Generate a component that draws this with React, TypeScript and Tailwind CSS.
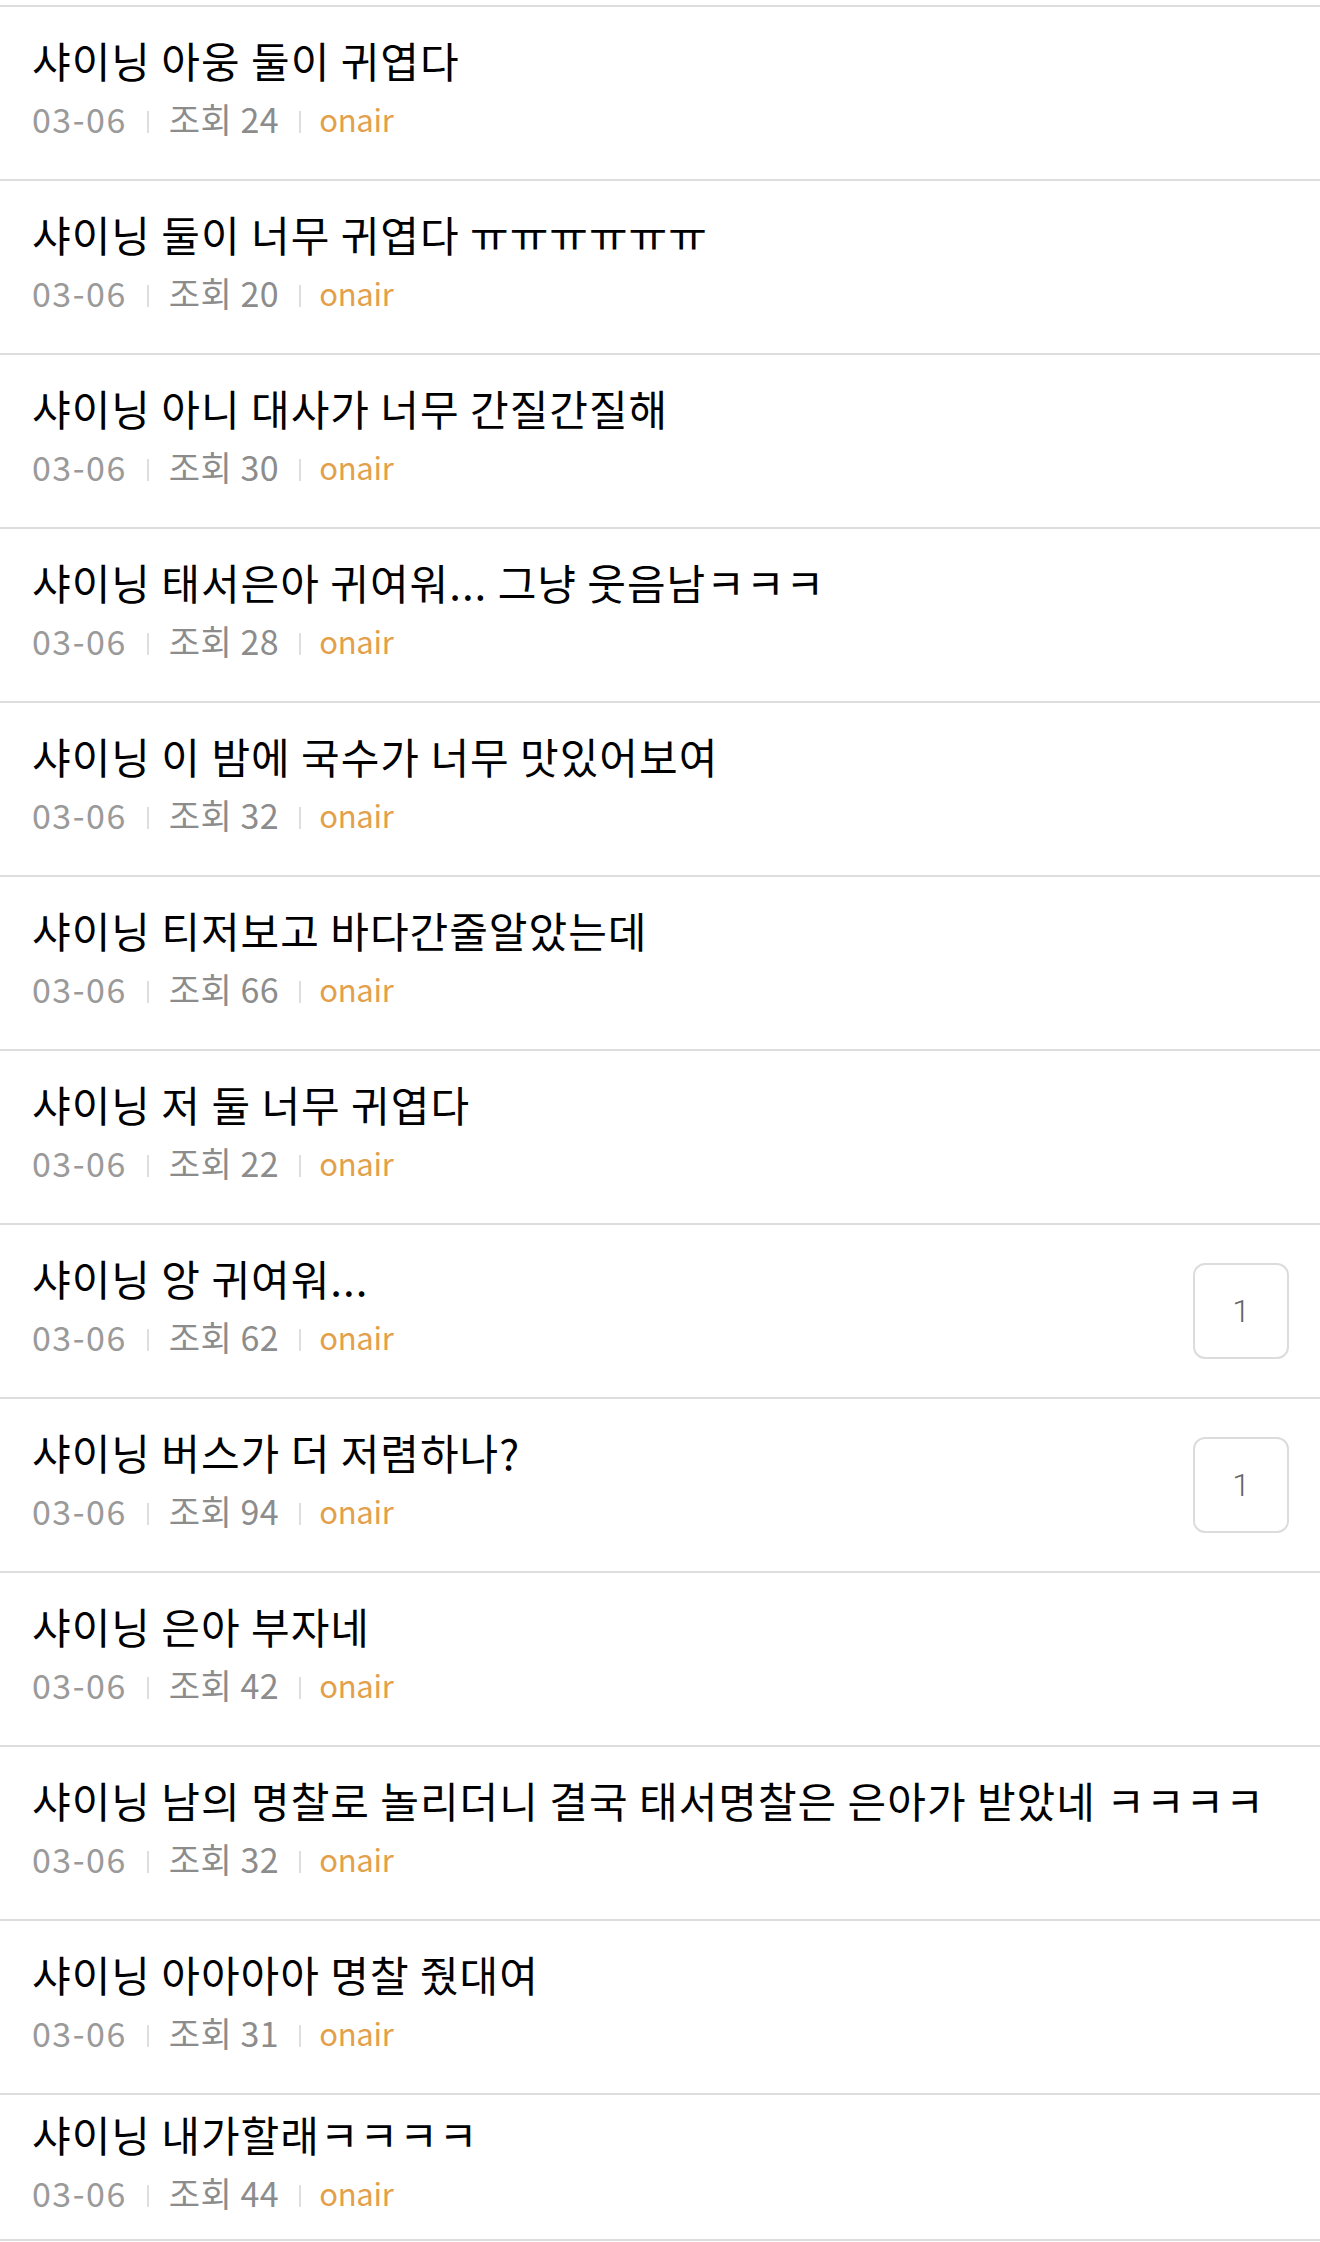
import React from 'react';

interface Post {
  title: string;
  date: string;
  views: number;
  author: string;
  comments?: number;
}

const posts: Post[] = [
  { title: '샤이닝 아웅 둘이 귀엽다', date: '03-06', views: 24, author: 'onair' },
  { title: '샤이닝 둘이 너무 귀엽다 ㅠㅠㅠㅠㅠㅠ', date: '03-06', views: 20, author: 'onair' },
  { title: '샤이닝 아니 대사가 너무 간질간질해', date: '03-06', views: 30, author: 'onair' },
  { title: '샤이닝 태서은아 귀여워... 그냥 웃음남ㅋㅋㅋ', date: '03-06', views: 28, author: 'onair' },
  { title: '샤이닝 이 밤에 국수가 너무 맛있어보여', date: '03-06', views: 32, author: 'onair' },
  { title: '샤이닝 티저보고 바다간줄알았는데', date: '03-06', views: 66, author: 'onair' },
  { title: '샤이닝 저 둘 너무 귀엽다', date: '03-06', views: 22, author: 'onair' },
  { title: '샤이닝 앙 귀여워...', date: '03-06', views: 62, author: 'onair', comments: 1 },
  { title: '샤이닝 버스가 더 저렴하나?', date: '03-06', views: 94, author: 'onair', comments: 1 },
  { title: '샤이닝 은아 부자네', date: '03-06', views: 42, author: 'onair' },
  { title: '샤이닝 남의 명찰로 놀리더니 결국 태서명찰은 은아가 받았네 ㅋㅋㅋㅋ', date: '03-06', views: 32, author: 'onair' },
  { title: '샤이닝 아아아아 명찰 줬대여', date: '03-06', views: 31, author: 'onair' },
  { title: '샤이닝 내가할래ㅋㅋㅋㅋ', date: '03-06', views: 44, author: 'onair' },
];

const Sep = ({ right = 20 }: { right?: number }) => (
  <span
    className={`ml-[20px] mt-[6px] inline-block h-[22px] w-[2px] bg-[#dedede] ${right === 20 ? 'mr-[20px]' : 'mr-[18px]'}`}
  ></span>
);

export default function App() {
  return (
    <div
      className="min-h-screen bg-white pt-[5px]"
      style={{ fontFamily: '"Noto Sans CJK KR", "Noto Sans", sans-serif' }}
    >
      <ul>
        {posts.map((post, i) => (
          <li
            key={i}
            className={`flex items-center border-t-2 border-[#dddddd] pl-[32px] pr-[31px] ${
              i === posts.length - 1 ? 'h-[148px] border-b-2' : 'h-[174px]'
            }`}
          >
            <div className="flex-grow min-w-0 pt-[2px] pb-[16px]">
              <p className="text-[42px] leading-[54px] tracking-[1px] text-black whitespace-nowrap">{post.title}</p>
              <p className="mt-[12px] flex items-center text-[34px] leading-[40px] tracking-[1.5px] text-[#9a9a9a]">
                <span>{post.date}</span>
                <Sep />
                <span className="text-[#8c8c8c] tracking-[0.5px]">조회 {post.views}</span>
                <Sep right={18} />
                <span className="text-[31px] tracking-[-0.3px] text-[#e3a04a]">{post.author}</span>
              </p>
            </div>
            {post.comments !== undefined && (
              <div className="ml-4 flex h-[96px] w-[96px] flex-shrink-0 items-center justify-center rounded-[12px] border-2 border-[#dcdcdc] font-['Roboto'] text-[32px] font-light text-[#666]">
                {post.comments}
              </div>
            )}
          </li>
        ))}
      </ul>
    </div>
  );
}
